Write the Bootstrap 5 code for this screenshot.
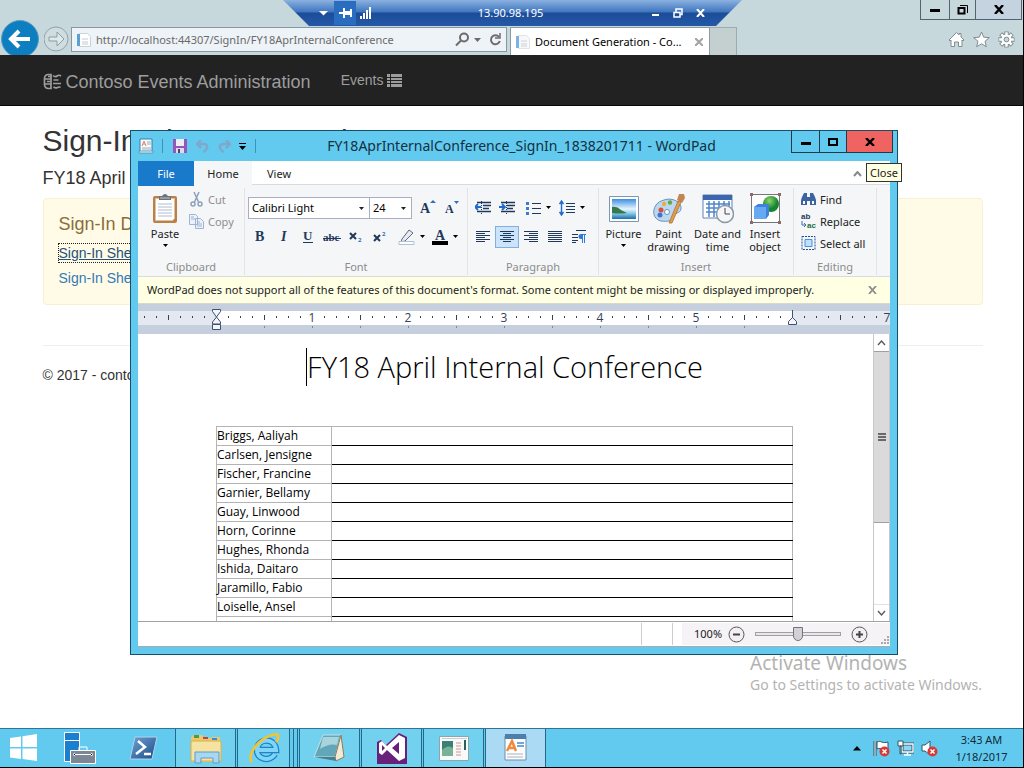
<!DOCTYPE html>
<html lang="en">
<head>
<meta charset="utf-8">
<meta name="viewport" content="width=device-width, initial-scale=1">
<title>Document Generation - Contoso Events</title>
<link rel="stylesheet" href="https://cdn.jsdelivr.net/npm/bootstrap@5.3.0/dist/css/bootstrap.min.css">
<style>
:root{--ui:"Noto Sans","Open Sans",sans-serif;--site:"Liberation Sans",Arial,sans-serif;--sky:#62caef;--ink:#1e395b}
body{font-family:var(--ui);font-size:11px;line-height:16px;color:#222;border-right:1px solid #000;border-bottom:1px solid #000}
svg{display:block;flex:none}
.btn{--bs-btn-padding-x:0;--bs-btn-padding-y:0;--bs-btn-font-size:inherit;--bs-btn-line-height:inherit;--bs-btn-border-width:0;--bs-btn-border-radius:0;--bs-btn-color:inherit;display:inline-flex;align-items:center;justify-content:center}

/* browser frame */
.chrome{background:#c6d8dc;height:55px}
.nav-row{margin-top:-1px}
.nav-ctl{width:71px;height:36px}
.frame-ctl{border:1px solid #55626f;border-top:0;height:20px;margin-right:1px}
.frame-ctl .btn{width:28px;color:#000}
.frame-ctl .btn+.btn{border-left:1px solid #55626f;width:26px}
.frame-ctl .btn:last-child{width:46px;background:#c5d2df}
.addr{flex:0 1 436px;height:25px;border:1px solid #8497a3;background:#eef3f8;padding:0 4px}
.addr input{border:0;background:none;color:#6a6a6a;min-width:0;flex:1;padding:0;outline:0}
.page-tab{flex:0 1 200px;height:28px;background:#fff;border:1px solid #8d9ba3;border-bottom:0;padding:0 6px 0 4px;margin-left:3px;color:#000;min-width:0}
.new-tab{width:27px;height:28px;background:#c4cfd0;border:1px solid #9eabad;border-left:0;border-bottom:0}
.rdp{left:283px;top:0;width:459px;height:26px;clip-path:polygon(0 0,100% 0,433px 100%,26px 100%);background:linear-gradient(#8bb1e0,#3e76be 46%,#1d4c98 50%,#2459a8);color:#fff;padding:0 31px 0 29px}
.rdp .btn{height:24px;width:22px}
.rdp .pin{background:#2a6cc0}

/* site */
.site{font-family:var(--site);font-size:14px;line-height:20px;color:#333}
.site-bar{background:#222;border-bottom:1px solid #080808;height:51px;color:#9d9d9d}
.site-wrap{max-width:970px;margin:0 auto;padding:0 14px 0 16px;width:100%}
.site-bar a{color:#9d9d9d;text-decoration:none}
.site-bar .brand{font-size:18px;padding-top:3px;margin-right:30px}
.site h1{font-size:30px;line-height:33px;margin:18px 0 0;font-weight:400}
.site h2{font-size:18px;line-height:20px;margin:11px 0 10px;font-weight:400}
.docs{background:#fffbe6;border:1px solid #faefd0;border-radius:4px;padding:15px;height:107px;margin:0}
.docs h3{font-size:18px;line-height:20px;margin:0 0 10px;color:#8a6d3b;font-weight:400}
.docs a{color:#337ab7;text-decoration:none;display:table;margin-bottom:7px;line-height:18px}
.docs a.current{color:#23527c;text-decoration:underline;outline:1px dotted #222}
.site hr{margin:40px 0 19px;border-color:#eee;opacity:1}

/* WordPad window */
.wordpad{left:130px;top:130px;width:768px;background:var(--sky);border:1px solid #17506b;padding:0 7px 7px}
.titlebar{height:30px}
.titlebar .caption-text{font-size:14px;color:#12303f;flex:1;text-align:center;white-space:nowrap;padding-right:4px}
.win-ctl{height:22px;border:1px solid #22394a;border-top:0;align-self:flex-start;margin-right:-3px;color:#000}
.win-ctl .btn{width:27px}
.win-ctl .btn+.btn{border-left:1px solid #22394a}
.win-ctl .close-ctl{width:46px;background:#ef6461}
.qat{width:18px}
.vline{width:1px;height:14px;background:#3f93b6}
.ribbon-tabs{height:24px;background:#fff;border-bottom:1px solid #dadbdc}
.ribbon-tabs .btn{height:25px}
.tab-file{width:56px;background:#1979ca;color:#fff!important}
.tab-home{width:58px;background:#f5f6f7}
.tab-view{width:54px}
.collapse-ctl{width:66px}
.ribbon{background:#f5f6f7;height:92px;border-bottom:1px solid #dadbdc}
.grp{border-right:1px solid #e2e3e4;margin:3px 0 1px;padding:5px 3px 0;display:flex;flex-direction:column}
.grp-name{margin-top:auto;text-align:center;color:#8c8c8c;line-height:16px}
.ribbon,.ribbon .btn{line-height:13px}
.tool-row{margin-top:4px}
.tool-row+.tool-row{margin-top:7px}
.big{flex-direction:column;justify-content:flex-start!important;height:62px;white-space:nowrap}
.big svg:first-child{margin-bottom:3px}
.small-tools{margin-top:-5px}
.small-tool{height:22px;gap:4px;justify-content:flex-start!important;white-space:nowrap}
.off{color:#8f8f8f!important}
.pick{appearance:none;height:22px;border:1px solid #abadc5;background:#fff url("data:image/svg+xml,%3Csvg xmlns='http://www.w3.org/2000/svg' width='5' height='3'%3E%3Cpath d='M0 0h5L2.500 3z' fill='%23222'/%3E%3C/svg%3E") no-repeat right 5px center;padding:0 3px;line-height:16px;color:#000}
.pick+.pick{border-left:0}
.ribbon .btn.sq{width:24px;height:22px}
.ribbon .btn.drop{width:30px;height:22px;gap:5px;margin-left:4px}
.sq.on{background:#cce4fb;outline:1px solid #84aede;outline-offset:-1px}
.notice{background:#ffffe3;height:27px;color:#222;padding:0 13px 0 9px;border-bottom:1px solid #d8d8cc}
.doc{height:287px;background:#fff;overflow:hidden}
.paper{padding:0 80px 0 78px}
.doc h1{font-family:"Open Sans","Noto Sans",sans-serif;font-weight:300;font-size:29px;line-height:38px;color:#000;text-align:center;margin:14px 0 40px}
.caret{display:inline-block;width:1px;height:38px;background:#000;vertical-align:top}
.sheet{width:577px;border-collapse:collapse;color:#000;font-family:"Open Sans",sans-serif;font-size:12px;line-height:18px}
.sheet td{height:19px;padding:0;border:1px solid #b4b4b4}
.sheet td:first-child{width:115px}
.sheet td+td{border-bottom-color:#000}
.sheet tr+tr td+td{border-top-color:#000}
.scroll{width:17px;background:#fff;border-left:1px solid #c8c8c8;border-right:1px solid #c8c8c8}
.scroll .btn{height:17px}
.thumb{height:172px;background:#dadada;border:solid #a0a0a0;border-width:1px 0}
.status{height:26px;background:#fff;border-top:1px solid #a3a3a3;border-bottom:1px solid #b0a8a8;color:#222}
.status i{width:1px;height:22px;background:#ccc}
.status i+i{margin:0 9px 0 30px}
.zoomer{background:#f6f3f7;height:22px;width:208px;padding-left:12px}
.zoomer .pct{width:34px}
.zoomer input{appearance:none;width:86px;height:16px;margin:0 10px 0 10px;background:linear-gradient(#e9e5eb,#e9e5eb) center/84px 2px no-repeat,linear-gradient(#a39da6,#a39da6) center/100% 4px no-repeat}
.zoomer input::-webkit-slider-thumb{appearance:none;width:10px;height:14px;background:#d5d0d8;border:1px solid #77717b;border-radius:0 0 5px 5px}
.tip{left:866px;top:163px;border:1px solid #333;background:#ffffe1;color:#222;height:19px;line-height:17px;padding:0 3px;white-space:nowrap}
.activate{right:41px;bottom:73px;color:#b3b3b3;font-size:14px;line-height:18px;white-space:nowrap}
.activate strong{font-weight:400;font-size:19px;line-height:26px;display:block}

/* taskbar */
.taskbar{height:39px;background:var(--sky);border-top:1px solid #2d7593;color:#102a38}
.taskbar .btn{height:38px;width:64px}
.taskbar .btn.start{width:48px}
.taskbar .btn.shell{width:63px}
.taskbar .btn.open{width:61px;border:solid #23698a;border-width:0 1px;margin-right:1px;background:#72d1ee}
.taskbar .btn.ie{width:53px;margin-right:0}
.stack{width:4px;border-right:1px solid #23698a}
.stack+.btn{margin-left:1px}
.taskbar .btn.front{background:#abdaf5}
.taskbar .tray .btn{width:24px}
.clock{width:82px;line-height:17px;white-space:nowrap;padding-right:1px}
</style>
</head>
<body class="vh-100 d-flex flex-column position-relative overflow-hidden bg-white">

<header class="chrome d-flex flex-column position-relative">
  <div class="d-flex justify-content-end">
    <div class="frame-ctl d-flex">
      <button class="btn" aria-label="Minimize"><svg width="10" height="8"><path d="M0 3h10v3H0z"/></svg></button>
      <button class="btn" aria-label="Restore"><svg width="11" height="11" fill="none" stroke="#000"><path d="M1.500 4h6v5.500h-6z" stroke-width="2"/><path d="M3 1.500h7.500V9"/></svg></button>
      <button class="btn" aria-label="Close"><svg width="10" height="9"><path d="M1 0l8 9M9 0L1 9" stroke="#000" stroke-width="2.400"/></svg></button>
    </div>
  </div>
  <div class="nav-row d-flex position-relative">
    <div class="nav-ctl d-flex align-items-center flex-shrink-0">
      <button class="btn" aria-label="Back"><svg width="40" height="36" viewBox="0 0 40 36"><circle cx="20" cy="20" r="18.500" fill="#0d7fc0" stroke="#5e9dbe"/><path d="M30 20H12M19 12l-8 8 8 8" fill="none" stroke="#fff" stroke-width="4"/></svg></button>
      <button class="btn ms-1" aria-label="Forward"><svg width="27" height="36" viewBox="0 0 27 36"><circle cx="12" cy="20" r="12" fill="#cfdde1" stroke="#90a3ab"/><path d="M5 18h8v-5l7 7-7 7v-5H5z" fill="#dfe8ea" stroke="#8b9ba3"/></svg></button>
    </div>
    <div class="addr d-flex align-items-center mt-2 gap-1">
      <svg width="16" height="16"><path d="M3.500 1.500h8l3 3v10h-11z" fill="#fff" stroke="#c9d3da"/><path d="M6 7h6M6 10h6M6 12h6" stroke="#c0cbd3"/><path d="M1 2h3v12H1z" fill="#5c9fd3"/></svg>
      <input type="text" aria-label="Address" value="http://localhost:44307/SignIn/FY18AprInternalConference">
      <button class="btn" aria-label="Search"><svg width="15" height="15" fill="none" stroke="#6c6c6c" stroke-width="2"><circle cx="9" cy="5.500" r="4"/><path d="M6 8.500L1 13.500"/></svg></button>
      <svg width="7" height="4"><path d="M0 0h7L3.500 4z" fill="#6c6c6c"/></svg>
      <button class="btn ms-1" aria-label="Refresh"><svg width="13" height="13" fill="none" stroke="#6c6c6c" stroke-width="2"><path d="M10 4a4.500 4.500 0 1 0 .8 4"/><path d="M11 0v5H6" stroke-width="1.500"/></svg></button>
    </div>
    <div class="page-tab d-flex align-items-center mt-2 gap-1">
      <svg width="16" height="16"><path d="M3.500 1.500h8l3 3v10h-11z" fill="#f6f8fa" stroke="#dfe4e8"/><path d="M6 7h6M6 10h6M6 12h6" stroke="#c9d3da"/><path d="M1 2h3v12H1z" fill="#7bb4e0"/></svg>
      <span class="text-nowrap flex-fill">Document Generation - Co...</span>
      <button class="btn" aria-label="Close tab"><svg width="8" height="8"><path d="M0 0l8 8M8 0L0 8" stroke="#a3a3a3" stroke-width="2"/></svg></button>
    </div>
    <button class="btn new-tab mt-2" aria-label="New tab"></button>
    <div class="d-flex ms-auto align-items-center gap-2 pe-2 pt-1">
      <button class="btn" aria-label="Home"><svg width="17" height="17"><path d="M1 9l7.500-7.500L11 4V2.500h2V6l3 3-1 1-1-1v6.500h-3.500V11h-4v4.500H3V9l-1 1z" fill="#fff" stroke="#7f8c90"/></svg></button>
      <button class="btn" aria-label="Favorites"><svg width="17" height="17"><path d="M8.500 1l2.200 5.200 5.600.4-4.300 3.700 1.300 5.400-4.800-2.900-4.800 2.900L5 10.300.7 6.600l5.600-.4z" fill="#fff" stroke="#7f8c90"/></svg></button>
      <button class="btn" aria-label="Tools"><svg width="17" height="17" viewBox="-8.500 -8.500 17 17"><g stroke="#7f8c90" stroke-width="4.400"><path d="M0-8V8M-8 0H8M-5.700-5.700L5.700 5.700M5.700-5.700L-5.700 5.700"/></g><circle r="5.800" fill="#7f8c90"/><g stroke="#fff" stroke-width="2.400"><path d="M0-7.300V7.300M-7.300 0H7.300M-5.200-5.200L5.200 5.200M5.200-5.200L-5.200 5.200"/></g><circle r="5" fill="#fff"/><circle r="2.400" fill="#c6d8dc" stroke="#7f8c90"/></svg></button>
    </div>
  </div>
</header>

<div class="rdp position-absolute d-flex align-items-center">
  <button class="btn" aria-label="Menu"><svg width="9" height="5"><path d="M0 0h9L4.500 4.500z" fill="#fff"/></svg></button>
  <button class="btn pin" aria-label="Pin"><svg width="13" height="10" fill="#fff"><path d="M0 4h4v2H0zM4 0h2v10H4zM6 3h5v4H6zM11 1h2v8h-2z"/></svg></button>
  <span class="px-1"><svg width="12" height="12" fill="#fff"><path d="M0 9h2v3H0zM3 6h2v6H3zM6 3h2v9H6zM9 0h2v12H9z"/></svg></span>
  <span class="flex-fill text-center">13.90.98.195</span>
  <button class="btn" aria-label="Minimize session"><svg width="8" height="12"><path d="M0 7h7v2H0z" fill="#fff"/></svg></button>
  <button class="btn" aria-label="Restore session"><svg width="10" height="10" fill="none" stroke="#fff" stroke-width="1.500"><path d="M1 4.500h6V9H1zM3 4V1h6v5.500H7"/></svg></button>
  <button class="btn" aria-label="Disconnect"><svg width="9" height="8"><path d="M1 0l7 8M8 0L1 8" stroke="#fff" stroke-width="2"/></svg></button>
</div>

<div class="site flex-grow-1">
  <nav class="site-bar">
    <div class="site-wrap d-flex align-items-center h-100">
      <a href="#" class="brand d-flex align-items-center gap-1">
        <svg width="19" height="17" fill="none" stroke="#9d9d9d" stroke-width="1.700"><path d="M1.500 5q.5-3.500 4-3.500H8v14H5.500q-3.500 0-4-3.500zM2 6h6M2 11h6M4 8.500h3M5 3.500h3"/><path d="M10 2.500q2 2 4 .5t4 0M10.500 7h5M10 10.500h8M10.500 14q2 1.500 4 .5t3 0"/></svg>
        Contoso Events Administration</a>
      <a href="#" class="d-flex align-items-center gap-1"><span>Events</span>
        <svg width="15" height="13" fill="#9d9d9d"><path d="M0 0h3v3H0zM4 0h11v3H4zM0 4h3v2H0zM4 4h11v2H4zM0 7h3v2H0zM4 7h11v2H4zM0 10h3v3H0zM4 10h11v3H4z"/></svg></a>
    </div>
  </nav>
  <main class="site-wrap">
    <h1>Sign-In Sheet Generation</h1>
    <h2>FY18 April</h2>
    <section class="docs">
      <h3>Sign-In Doc</h3>
      <a href="#" class="current">Sign-In Sheet</a>
      <a href="#">Sign-In Sheet</a>
    </section>
    <hr>
    <footer>© 2017 - contoso</footer>
  </main>
</div>

<section class="wordpad position-absolute" aria-label="WordPad">
  <div class="titlebar d-flex align-items-center">
    <svg width="16" height="18"><path d="M2 2h12v13H2z" fill="#f7fbfd" stroke="#3b7fa4"/><path d="M1 14h14v2H1z" fill="#d6e9f2" stroke="#3b7fa4" stroke-width=".6"/><path d="M4 9l2-5 2 5M5 7h2" stroke="#e0885c" fill="none"/><path d="M9 5h4M9 7h4M4 11h9M4 13h9" stroke="#8fb0c3"/></svg>
    <span class="vline ms-2"></span>
    <button class="btn qat ms-2" aria-label="Save"><svg width="14" height="14"><path d="M0 0h14v14H0z" fill="#9258b8"/><path d="M3 0h8v7H3z" fill="#f2eaf7"/><path d="M3 9h8v5H3z" fill="#e2d8ea"/><path d="M5 10h2v4H5z" fill="#5c3a7b"/></svg></button>
    <button class="btn qat ms-1" aria-label="Undo"><svg width="13" height="13" fill="none" stroke="#7fa8cb" stroke-width="2.500"><path d="M2 4h5q5 0 4 4-1 3-4 4M5 0L1 4l4 4"/></svg></button>
    <button class="btn qat ms-1" aria-label="Redo"><svg width="13" height="13" fill="none" stroke="#7fa8cb" stroke-width="2.500"><path d="M11 4H6Q1 4 2 8q1 3 4 4M8 0l4 4-4 4"/></svg></button>
    <button class="btn qat" aria-label="Customize toolbar"><svg width="7" height="7"><path d="M0 0h7v1H0zM0 3h7L3.500 7z"/></svg></button>
    <span class="vline ms-1"></span>
    <span class="caption-text">FY18AprInternalConference_SignIn_1838201711 - WordPad</span>
    <div class="win-ctl d-flex">
      <button class="btn" aria-label="Minimize"><svg width="10" height="8"><path d="M0 4h10v3H0z"/></svg></button>
      <button class="btn" aria-label="Maximize"><svg width="10" height="8"><path d="M1 1h8v6H1z" fill="none" stroke="#000" stroke-width="2"/></svg></button>
      <button class="btn close-ctl" aria-label="Close"><svg width="10" height="8"><path d="M1 0l8 8M9 0L1 8" stroke="#000" stroke-width="2.400"/></svg></button>
    </div>
  </div>
  <div class="ribbon-tabs d-flex">
    <button class="btn tab-file">File</button>
    <button class="btn tab-home">Home</button>
    <button class="btn tab-view">View</button>
    <button class="btn collapse-ctl ms-auto" aria-label="Collapse ribbon"><svg width="9" height="6"><path d="M1 5l3.500-4L8 5" fill="none" stroke="#8a8a8a" stroke-width="2"/></svg></button>
  </div>
  <div class="ribbon d-flex">
    <div class="grp" style="width:107px">
      <div class="d-flex">
        <button class="btn big" style="width:48px"><svg width="28" height="31"><rect x="2" y="3" width="24" height="27" rx="2" fill="#bd8044"/><path d="M4.500 5.500h19v20l-2 2h-17z" fill="#fff" stroke="#d9c3a5"/><path d="M7 11h14M7 14h14M7 17h14M7 20h14M7 23h14" stroke="#aebccd"/><path d="M8 3h3q3-4 6 0h3v4H8z" fill="#6d7278"/><path d="M9 5h10" stroke="#c3c7ca"/></svg>Paste<svg width="5" height="4" class="mt-1"><path d="M0 0h5L2.500 3z"/></svg></button>
        <div class="small-tools d-flex flex-column">
          <button class="btn small-tool off"><svg width="15" height="16" fill="none" stroke="#8ea0bd" stroke-width="1.500"><path d="M5 1l4.500 10M10 1L5.500 11"/><circle cx="4" cy="13" r="2"/><circle cx="11" cy="13" r="2"/></svg>Cut</button>
          <button class="btn small-tool off"><svg width="15" height="15" fill="#edf2fa" stroke="#9fb3d3"><path d="M.5.5h6l2 2v8h-8zM6.500 4.500h5l3 3v7h-8z"/><path d="M8 8h3M8 10h5M8 12h5M2 3h3M2 5h4"/></svg>Copy</button>
        </div>
      </div>
      <div class="grp-name">Clipboard</div>
    </div>
    <div class="grp" style="width:223px">
      <div class="tool-row d-flex align-items-center">
        <select class="pick" aria-label="Font family" style="width:122px"><option>Calibri Light</option></select>
        <select class="pick" aria-label="Font size" style="width:42px"><option>24</option></select>
        <button class="btn sq ms-1" aria-label="Grow font"><svg width="16" height="18"><text x="0" y="14" font-family="Liberation Serif" font-weight="700" font-size="14" fill="#1e395b">A</text><path d="M10 4l3-3 3 3z" fill="#2f6fc0"/></svg></button>
        <button class="btn sq" aria-label="Shrink font"><svg width="14" height="18"><text x="0" y="14" font-family="Liberation Serif" font-weight="700" font-size="12" fill="#1e395b">A</text><path d="M9 2h5l-2.500 3z" fill="#2f6fc0"/></svg></button>
      </div>
      <div class="tool-row d-flex align-items-center">
        <button class="btn sq" aria-label="Bold"><svg width="12" height="16"><text x="1" y="12" font-family="Liberation Serif" font-weight="700" font-size="14" fill="#1e395b">B</text></svg></button>
        <button class="btn sq" aria-label="Italic"><svg width="12" height="16"><text x="3" y="12" font-family="Liberation Serif" font-weight="700" font-style="italic" font-size="14" fill="#1e395b">I</text></svg></button>
        <button class="btn sq" aria-label="Underline"><svg width="12" height="16"><text x="1" y="11" font-family="Liberation Serif" font-weight="700" font-size="13" fill="#1e395b">U</text><path d="M1 13.500h10" stroke="#1e395b"/></svg></button>
        <button class="btn sq" aria-label="Strikethrough"><svg width="18" height="16"><text x="0" y="12" font-family="Liberation Serif" font-weight="700" font-size="11" fill="#1e395b">abc</text><path d="M0 9.500h18" stroke="#1e395b"/></svg></button>
        <button class="btn sq" aria-label="Subscript"><svg width="14" height="16"><path d="M1 4l6 6M7 4l-6 6" stroke="#1e395b" stroke-width="2"/><text x="9" y="13" font-family="Open Sans" font-weight="700" font-size="6" fill="#2f6fc0">2</text></svg></button>
        <button class="btn sq" aria-label="Superscript"><svg width="14" height="16"><path d="M1 6l6 6M7 6L1 12" stroke="#1e395b" stroke-width="2"/><text x="9" y="7" font-family="Open Sans" font-weight="700" font-size="6" fill="#2f6fc0">2</text></svg></button>
        <button class="btn drop" aria-label="Highlight"><svg width="17" height="17"><path d="M4 10l7-9 4 3-8 8-4 1z" fill="#e8ebf2" stroke="#5d6a80"/><path d="M1 12.500h15v3H1z" fill="#fff" stroke="#b2c2d6"/></svg><svg width="5" height="4"><path d="M0 0h5L2.500 3z"/></svg></button>
        <button class="btn drop" aria-label="Font color"><svg width="16" height="20"><text x="3" y="13" font-family="Liberation Serif" font-weight="700" font-size="14" fill="#1e395b">A</text><path d="M0 14h16v4H0z"/></svg><svg width="5" height="4"><path d="M0 0h5L2.500 3z"/></svg></button>
      </div>
      <div class="grp-name">Font</div>
    </div>
    <div class="grp" style="width:131px">
      <div class="tool-row d-flex align-items-center">
        <button class="btn sq" aria-label="Decrease indent"><svg width="16" height="14" stroke="#1e395b" fill="none"><path d="M2 1.500h14M8 4.500h8M8 7.500h6M2 10.500h14" stroke-width="1.500"/><path d="M6.500 0v14" stroke-dasharray="1 1"/><path d="M6 6H1M3 3L0 6l3 3" stroke="#1d6bd0" stroke-width="1.800"/></svg></button>
        <button class="btn sq" aria-label="Increase indent"><svg width="16" height="14" stroke="#1e395b" fill="none"><path d="M2 1.500h14M8 4.500h8M8 7.500h6M2 10.500h14" stroke-width="1.500"/><path d="M7.500 0v14" stroke-dasharray="1 1"/><path d="M0 6h6M3 3l3 3-3 3" stroke="#1d6bd0" stroke-width="1.800"/></svg></button>
        <button class="btn drop" aria-label="Bullets"><svg width="15" height="14"><path d="M0 1h3v3H0zM0 6h3v3H0zM0 11h3v3H0z" fill="#3b7bd0"/><path d="M6 2.500h9M6 7.500h9M6 12.500h9" stroke="#1e395b"/></svg><svg width="5" height="4"><path d="M0 0h5L2.500 3z"/></svg></button>
        <button class="btn drop" aria-label="Line spacing"><svg width="16" height="16"><path d="M7 3.500h9M7 6.500h9M7 9.500h9M7 12.500h9" stroke="#1e395b"/><path d="M2.500 2v12M.5 4l2-3 2 3M.5 12l2 3 2-3" fill="none" stroke="#1d6bd0" stroke-width="1.400"/></svg><svg width="5" height="4"><path d="M0 0h5L2.500 3z"/></svg></button>
      </div>
      <div class="tool-row d-flex align-items-center">
        <button class="btn sq" aria-label="Align left"><svg width="14" height="12"><path d="M0 .5h14M0 2.500h9M0 4.500h14M0 6.500h9M0 8.500h14M0 10.500h9" stroke="#1e395b"/></svg></button>
        <button class="btn sq on" aria-label="Center"><svg width="14" height="12"><path d="M0 .5h14M3 2.500h8M0 4.500h14M3 6.500h8M0 8.500h14M3 10.500h8" stroke="#1e395b"/></svg></button>
        <button class="btn sq" aria-label="Align right"><svg width="14" height="12"><path d="M0 .5h14M5 2.500h9M0 4.500h14M5 6.500h9M0 8.500h14M5 10.500h9" stroke="#1e395b"/></svg></button>
        <button class="btn sq" aria-label="Justify"><svg width="14" height="12"><path d="M0 .5h14M0 2.500h14M0 4.500h14M0 6.500h14M0 8.500h14M0 10.500h14" stroke="#1e395b"/></svg></button>
        <button class="btn sq" aria-label="Paragraph"><svg width="14" height="14"><path d="M4 .5h10M0 4.500h6M0 7.500h6M0 10.500h6M0 12.500h4" stroke="#1e395b"/><path d="M9 9a2.500 2.500 0 1 1 0-5h5v1h-1v8h-1V5h-1v8h-1V9z" fill="#2f7bd8"/></svg></button>
      </div>
      <div class="grp-name">Paragraph</div>
    </div>
    <div class="grp" style="width:195px">
      <div class="d-flex">
        <button class="btn big" style="width:43px"><svg width="30" height="31"><defs><linearGradient id="sky" x2="0" y2="1"><stop stop-color="#3c8ee0"/><stop offset=".5" stop-color="#e6f5fd"/><stop offset=".7" stop-color="#8fcfe9"/><stop offset="1" stop-color="#1c6cb0"/></linearGradient></defs><path d="M.5 3.500h29v25H.5z" fill="#fff" stroke="#7c98b5"/><path d="M3 6h24v20H3z" fill="url(#sky)"/><path d="M3 14q5-1 9 3l6 3q-8 1-15 0z" fill="#35794d"/></svg>Picture<svg width="5" height="4" class="mt-1"><path d="M0 0h5L2.500 3z"/></svg></button>
        <button class="btn big" style="width:47px"><svg width="34" height="31"><path d="M12 7c8-3 18 2 17 9-1 5-6 3-7 7-1 5-7 6-13 5C1 26 0 18 4 12c2-3 5-4 8-5z" fill="#bcd8f0" stroke="#6593bd"/><circle cx="9" cy="17" r="2.500" fill="#d9503a"/><circle cx="12" cy="11" r="2.200" fill="#e8b13c"/><circle cx="18" cy="9.500" r="2.200" fill="#63aa4a"/><circle cx="8" cy="22" r="2.500" fill="#4275cc"/><circle cx="15" cy="19" r="2.500" fill="#fff" stroke="#6593bd"/><path d="M17 30l9-22 3 1-9 21z" fill="#e39d4b" stroke="#a4642a" stroke-width=".7"/><path d="M25 7l2-6h5l1 4-3 5z" fill="#c18750"/></svg>Paint<span>drawing</span></button>
        <button class="btn big" style="width:51px"><svg width="32" height="31"><path d="M1 2h29v23H1z" fill="#fff" stroke="#6283b2"/><path d="M1 2h29v5H1z" fill="#3c67b0"/><path d="M4 11h24M4 15h24M4 19h24M7 8v16M12 8v16M17 8v16M22 8v16M27 8v16" stroke="#4e87ce" stroke-width="1.500"/><circle cx="23" cy="21" r="8.500" fill="#f4f6f8" stroke="#8a98a6" stroke-width="1.500"/><path d="M23 15v6h5" fill="none" stroke="#444"/></svg>Date and<span>time</span></button>
        <button class="btn big" style="width:44px"><svg width="32" height="31"><defs><radialGradient id="ball" cx=".4" cy=".3"><stop stop-color="#8ed66d"/><stop offset="1" stop-color="#16852f"/></radialGradient></defs><path d="M2.500 1.500h28v28h-28z" fill="#fdfdfd" stroke="#777"/><circle cx="22" cy="11" r="8" fill="url(#ball)"/><path d="M5 14l4-3h11v11l-3 4H5z" fill="#3d83dd"/><path d="M5 14h12v12H5z" fill="#66a8f2"/><path d="M1 0h3v3H1zM29 0h3v3h-3zM1 28h3v3H1zM29 28h3v3h-3z" fill="#8d6a6a"/></svg>Insert<span>object</span></button>
      </div>
      <div class="grp-name">Insert</div>
    </div>
    <div class="grp" style="width:83px">
      <div class="small-tools d-flex flex-column ps-1">
        <button class="btn small-tool"><svg width="15" height="14" fill="#3c64a0"><path d="M1 5l2-4h3v12H0V8zM14 5l-2-4H9v12h6V8zM6 5h3v4H6z"/><path d="M2 9h2v3H2zM11 9h2v3h-2z" fill="#fff"/></svg>Find</button>
        <button class="btn small-tool"><svg width="15" height="20"><text x="0" y="8" font-family="Liberation Sans" font-weight="700" font-size="8" fill="#1e395b">ab</text><text x="6" y="17" font-family="Liberation Sans" font-weight="700" font-size="8" fill="#23713a">ac</text><path d="M1 10v4h3M3 12l2 2-2 2" fill="none" stroke="#2f6fc0"/></svg>Replace</button>
        <button class="btn small-tool"><svg width="15" height="14"><path d="M1 .5h13v13H1z" fill="none" stroke="#1f4e93" stroke-dasharray="2 1"/><path d="M4 3.500h7v7H4z" fill="#bfe0fb" stroke="#4b8fd6"/></svg>Select all</button>
      </div>
      <div class="grp-name">Editing</div>
    </div>
  </div>
  <div class="notice d-flex align-items-center justify-content-between"><span class="text-nowrap">WordPad does not support all of the features of this document's format. Some content might be missing or displayed improperly.</span><button class="btn" aria-label="Dismiss"><svg width="9" height="8"><path d="M1 0l7 8M8 0L1 8" stroke="#8c8c8c" stroke-width="1.800"/></svg></button></div>
  <svg width="100%" height="30" role="img" aria-label="Ruler">
    <defs>
      <pattern id="ticks" x="78" y="0" width="96" height="30" patternUnits="userSpaceOnUse"><path d="M12.500 12v2M24.500 12v2M36.500 12v2M60.500 12v2M72.500 12v2M84.500 12v2M48.500 11v5" stroke="#33415a"/></pattern>
      <pattern id="stops" x="78" y="0" width="48" height="30" patternUnits="userSpaceOnUse"><path d="M.5 22v2" stroke="#7b899e"/></pattern>
    </defs>
    <rect width="100%" height="30" fill="#c5cfdd"/><rect y="7" width="100%" height="14" fill="#e4e8f1"/><rect x="78" y="7" width="576" height="14" fill="#fff"/>
    <rect width="100%" height="30" fill="url(#ticks)"/><rect x="78" width="576" height="30" fill="url(#stops)"/>
    <g font-family="Open Sans" font-size="12" fill="#33415a" text-anchor="middle"><text x="174" y="18">1</text><text x="270" y="18">2</text><text x="366" y="18">3</text><text x="462" y="18">4</text><text x="558" y="18">5</text><text x="749" y="18">7</text></g>
    <g fill="#f2f5fa" stroke="#3f5273"><path d="M74.500 5.500h8v2L78.500 13l-4-5.500zM78.500 13l4 5v2h-8v-2zM74.500 20.500h8v5h-8zM654.500 6v8M650.500 20.500v-3l4-4 4 4v3z"/></g>
  </svg>
  <div class="doc d-flex">
    <div class="paper flex-fill">
      <h1><span class="caret"></span>FY18 April Internal Conference</h1>
      <table class="sheet">
        <tr><td>Briggs, Aaliyah</td><td></td></tr>
        <tr><td>Carlsen, Jensigne</td><td></td></tr>
        <tr><td>Fischer, Francine</td><td></td></tr>
        <tr><td>Garnier, Bellamy</td><td></td></tr>
        <tr><td>Guay, Linwood</td><td></td></tr>
        <tr><td>Horn, Corinne</td><td></td></tr>
        <tr><td>Hughes, Rhonda</td><td></td></tr>
        <tr><td>Ishida, Daitaro</td><td></td></tr>
        <tr><td>Jaramillo, Fabio</td><td></td></tr>
        <tr><td>Loiselle, Ansel</td><td></td></tr>
        <tr><td></td><td></td></tr>
      </table>
    </div>
    <div class="scroll d-flex flex-column">
      <button class="btn" aria-label="Scroll up"><svg width="9" height="6"><path d="M1 5l3.500-4L8 5" fill="none" stroke="#555" stroke-width="1.300"/></svg></button>
      <div class="thumb d-flex align-items-center justify-content-center"><svg width="8" height="8"><path d="M0 1h8M0 4h8M0 7h8" stroke="#444" stroke-width="1.600"/></svg></div>
      <button class="btn mt-auto border-top" aria-label="Scroll down"><svg width="9" height="6"><path d="M1 1l3.500 4L8 1" fill="none" stroke="#555" stroke-width="1.300"/></svg></button>
    </div>
  </div>
  <div class="status d-flex align-items-center justify-content-end">
    <i></i><i></i>
    <div class="zoomer d-flex align-items-center">
      <span class="pct">100%</span>
      <button class="btn" aria-label="Zoom out"><svg width="17" height="17"><circle cx="8.500" cy="8.500" r="7.500" fill="#f3f0f4" stroke="#5b555e"/><path d="M5 8.500h7" stroke="#444" stroke-width="2"/></svg></button>
      <input type="range" aria-label="Zoom" min="0" max="100" value="50">
      <button class="btn" aria-label="Zoom in"><svg width="17" height="17"><circle cx="8.500" cy="8.500" r="7.500" fill="#f3f0f4" stroke="#5b555e"/><path d="M5 8.500h7M8.500 5v7" stroke="#444" stroke-width="2"/></svg></button>
      <svg width="9" height="9" class="ms-auto align-self-end" fill="#aaa"><path d="M6 0h2v2H6zM3 3h2v2H3zM6 3h2v2H6zM0 6h2v2H0zM3 6h2v2H3zM6 6h2v2H6z"/></svg>
    </div>
  </div>
</section>
<div class="tip position-absolute" role="tooltip">Close</div>
<div class="activate position-absolute"><strong>Activate Windows</strong>Go to Settings to activate Windows.</div>

<footer class="taskbar d-flex align-items-stretch position-relative">
  <button class="btn start" aria-label="Start"><svg width="28" height="28" fill="#fff"><path d="M0 4l11-1.500V13H0zM12.500 2.200L27 0v13H12.500zM0 14.500h11V25L0 23.500zM12.500 14.500H27V27l-14.500-2z"/></svg></button>
  <button class="btn" aria-label="Server Manager"><svg width="34" height="34" stroke="#fff"><path d="M1.500 1.500h15v29h-15z" fill="#1b7fd0"/><path d="M1 9.500h16"/><path d="M7.500 19.500h25v13h-25z" fill="#7b8795"/><path d="M16 19v-3h8v3M10 23.500h20" fill="none"/><path d="M12 22l-2 1.500 2 1.500M28 22l2 1.500-2 1.500" /></svg></button>
  <button class="btn shell" aria-label="PowerShell"><svg width="30" height="24"><defs><linearGradient id="ps" y2="1"><stop stop-color="#6fa3d6"/><stop offset="1" stop-color="#1c4a86"/></linearGradient></defs><path d="M6 1h22l-5 22H1z" fill="url(#ps)" stroke="#b5d1e8"/><path d="M9 5l7 6-9 7M15 18h7" fill="none" stroke="#fff" stroke-width="2.500"/></svg></button>
  <button class="btn open" aria-label="File Explorer"><svg width="34" height="32"><path d="M2 6l2-3h9l2 3h7l2-1h7v25H2z" fill="#edc868"/><path d="M2 9h30v20H2z" fill="#f7e3a1" stroke="#d6af4f"/><path d="M5 3h5v3H5z" fill="#4b9b4b"/><path d="M14 5h5v2h-5z" fill="#c0453e"/><path d="M23 6h5v2h-5z" fill="#3a8ad6"/><path d="M6 31V20h24v11h-6v-5H12v5z" fill="#a9d6f1" stroke="#5b9ec9"/></svg></button>
  <button class="btn open ie" aria-label="Internet Explorer"><svg width="34" height="34" fill="none"><path d="M28 23c-5 8-19 6-18-5 1-11 18-12 19 1H11" stroke="#1f83c4" stroke-width="6.500"/><path d="M28 23c-5 8-19 6-18-5 1-11 18-12 19 1H11" stroke="#7fd6fa" stroke-width="4"/><path d="M5 31C-1 25 11 6 29 3c3 0 3 4 0 8" stroke="#f2c530" stroke-width="2.600"/></svg></button>
  <span class="stack"></span><span class="stack"></span>
  <button class="btn open" aria-label="Notepad"><svg width="34" height="30"><path d="M10 2h18l-6 22H1z" fill="#62a7b8" stroke="#bfe0e8"/><path d="M10 4h16l-2 8q-8-2-17 4z" fill="#a7d4dd"/><path d="M28 2l3 22-8 4-1-4z" fill="#f1ead6" stroke="#8d7c58"/><path d="M1 24h21l1 4z" fill="#47808f"/></svg></button>
  <button class="btn open" aria-label="Visual Studio"><svg width="30" height="32"><path d="M0 10l4-2 5 5L22 1l8 4v27H0z" fill="#68217a"/><path d="M22 3l6 3v20l-6 3L10 18l-5 5-3-2V11l3-2 5 5zM22 10l-7 6 7 6zM5 13v6l3-3z" fill="#fff" fill-rule="evenodd"/></svg></button>
  <button class="btn open" aria-label="Server app"><svg width="30" height="26"><path d="M.5 1.500h29v24H.5z" fill="#f8fafa" stroke="#92a4ab"/><path d="M3 6h11v15H3z" fill="#3b7f76"/><path d="M3 15q6-6 11-2v8H3z" fill="#79b396"/><path d="M17 8h5M17 11h5M17 14h5M17 17h5M17 20h5" stroke="#d89090"/><path d="M25 5h2v10h-2z" fill="#2c5e5b"/><path d="M3 3.500h25" stroke="#c7d0d4"/></svg></button>
  <button class="btn open front" aria-label="WordPad"><svg width="24" height="30"><path d="M1 3h21v24H1z" fill="#fbfcfd" stroke="#6b8fac"/><path d="M1 1h21v5H1z" fill="#4c7fae"/><path d="M3 18L8 8l4 10M5 15h6" fill="none" stroke="#ef8a3a" stroke-width="2.500"/><path d="M13 10h7M13 13h7" stroke="#4b86c6" stroke-width="1.500"/><path d="M3 21h16M3 24h16" stroke="#a7b6c2"/></svg></button>
  <div class="tray ms-auto d-flex align-items-center">
    <button class="btn" aria-label="Show hidden icons"><svg width="8" height="5"><path d="M0 4.500h8L4 0z"/></svg></button>
    <button class="btn" aria-label="Action Center"><svg width="17" height="17"><path d="M2 1v15" stroke="#2e5468" stroke-width="3"/><path d="M2 1v15" stroke="#fff"/><path d="M4 2c4-2 5 2 11 0v7c-5 2-6-2-11 0z" fill="#fff" stroke="#2e5468"/><circle cx="11.500" cy="11.500" r="5" fill="#d63a35"/><path d="M9.500 9.500l4 4M13.500 9.500l-4 4" stroke="#fff" stroke-width="1.500"/></svg></button>
    <button class="btn" aria-label="Network"><svg width="17" height="17" stroke="#2e5468"><path d="M5 4h11v8H5z" fill="#8bd6f2" stroke-width="3"/><path d="M5 4h11v8H5zM7 15h7M10.500 12v3" fill="none" stroke="#fff" stroke-width="1.400"/><path d="M1 1h5v5H1zM3 6h1v8H3z" fill="#fff"/></svg></button>
    <button class="btn" aria-label="Volume"><svg width="17" height="17"><path d="M1 5h3l5-4v14l-5-4H1z" fill="#fff" stroke="#2e5468"/><circle cx="11.500" cy="11.500" r="5" fill="#d63a35"/><path d="M9.500 9.500l4 4M13.500 9.500l-4 4" stroke="#fff" stroke-width="1.500"/></svg></button>
    <div class="clock text-center">3:43 AM<br>1/18/2017</div>
  </div>
</footer>
<script src="https://cdn.jsdelivr.net/npm/bootstrap@5.3.0/dist/js/bootstrap.bundle.min.js"></script>
</body>
</html>
